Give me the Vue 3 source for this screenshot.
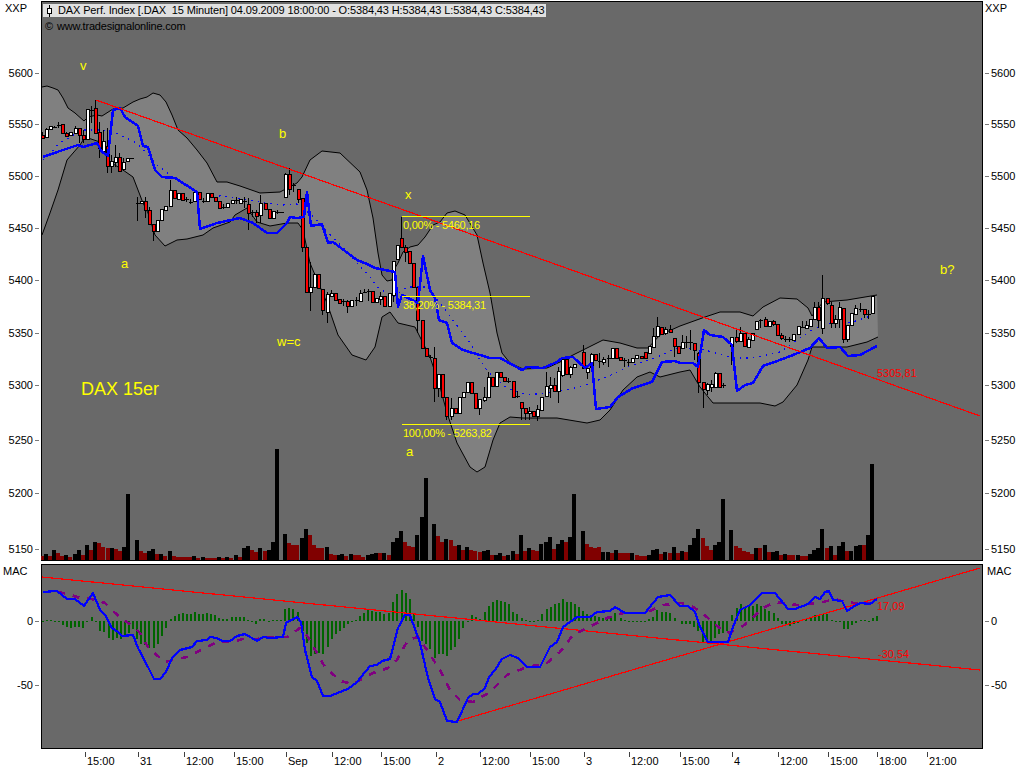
<script setup>
const toPoints = (pts) => pts.map((p) => p.join(',')).join(' ')

const titleText = 'DAX Perf. Index [.DAX  15 Minuten] 04.09.2009 18:00:00 - O:5384,43 H:5384,43 L:5384,43 C:5384,43'

const upper = [[42,87],[47,86],[53,88],[58,90],[63,98],[68,108],[75,113],[84,121],[88,117],[97,115],[102,116],[113,109],[123,108],[133,102],[140,99],[147,97],[153,93],[160,95],[166,102],[172,115],[178,130],[187,138],[197,150],[207,163],[217,182],[227,182],[240,186],[260,193],[280,192],[297,183],[302,177],[310,160],[322,151],[340,153],[360,172],[367,190],[373,218],[378,253],[382,275],[387,281],[392,280],[395,268],[398,263],[403,252],[410,247],[418,245],[425,237],[433,225],[440,222],[447,213],[455,211],[465,215],[477,235],[483,263],[490,293],[497,333],[502,353],[510,363],[523,369],[547,368],[560,362],[573,355],[587,348],[603,340],[620,343],[637,348],[648,348],[660,335],[680,326],[705,317],[720,312],[740,312],[753,316],[763,307],[780,298],[797,299],[808,308],[812,316],[823,302],[847,300],[877,295]]
const lower = [[42,235],[50,213],[58,190],[67,160],[80,145],[85,137],[100,142],[110,162],[123,170],[133,177],[138,190],[143,203],[148,213],[155,235],[165,246],[177,240],[187,239],[203,235],[213,228],[230,222],[235,215],[247,208],[257,222],[270,226],[287,223],[298,223],[303,230],[310,263],[315,275],[327,303],[338,335],[352,355],[366,360],[375,347],[382,317],[390,312],[398,323],[415,327],[423,343],[430,357],[440,387],[447,413],[457,443],[470,467],[477,472],[485,467],[493,440],[500,423],[510,417],[523,418],[557,418],[587,423],[600,420],[610,410],[623,390],[637,377],[650,372],[660,377],[680,372],[690,370],[700,387],[713,403],[728,403],[760,403],[775,406],[783,402],[797,385],[808,360],[812,347],[847,347],[867,342],[878,337]]
const bandFill = toPoints([...upper, ...[...lower].reverse()])
const upperLine = toPoints(upper)
const lowerLine = toPoints(lower)
const midLine = toPoints([[43,160],[52,152],[59,143],[83,130],[103,130],[115,133],[137,143],[157,165],[177,180],[197,193],[250,200],[267,203],[283,205],[297,204],[315,218],[328,233],[338,242],[357,263],[370,277],[377,287],[393,297],[407,287],[427,287],[440,303],[455,323],[470,343],[480,360],[488,372],[507,388],[527,395],[553,392],[580,387],[607,377],[627,367],[657,357],[680,347],[705,350],[733,358],[753,358],[780,352],[797,340],[812,330],[830,323],[853,322],[873,315]])
const maLine = toPoints([[43,157],[60,151],[78,145],[83,147],[97,143],[102,152],[108,156],[113,110],[120,108],[125,117],[138,126],[143,146],[148,147],[155,170],[162,177],[175,178],[197,192],[200,229],[217,223],[240,218],[253,223],[267,233],[277,233],[287,223],[290,217],[297,218],[304,217],[307,192],[311,226],[322,224],[328,243],[333,242],[357,260],[367,264],[375,268],[395,272],[398,307],[402,295],[418,303],[423,256],[430,290],[435,298],[439,320],[447,323],[452,343],[463,350],[490,358],[500,358],[522,370],[527,367],[543,368],[557,362],[562,358],[573,357],[585,368],[592,363],[596,409],[610,407],[618,397],[633,388],[652,382],[662,362],[675,361],[680,363],[693,363],[698,367],[704,330],[710,335],[723,337],[732,345],[737,391],[745,385],[753,383],[763,366],[780,360],[793,355],[810,348],[819,338],[827,348],[840,347],[848,356],[860,355],[877,346]])

const seg7 = [[129,'r',165,173,155,178],[141,'w',147,170,143,172],[153,'w',139,147,137,150],[165,'d',140,141,137,143],[177,'d',135,136,125,145],[189,'r',133,158],[201,'r',160,167,155,170],[213,'w',157,165,155,167],[229,'w',145,158,137,160],[241,'r',145,165,145,190],[253,'r',165,177,150,190],[265,'w',88,176],[277,'d',90,91,78,130],[289,'r',85,158,60,160],[301,'r',155,205,125,235],[313,'w',184,212,150,220],[325,'r',197,257,145,280],[337,'w',243,257,225,280],[349,'w',230,245,195,260],[361,'r',230,272,220,275],[373,'w',245,268,235,272],[385,'w',233,243],[397,'d',234,235],[415,'d',368,369,350,422],[427,'w',362,370],[439,'r',362,390,350,413],[451,'r',390,433,380,435],[463,'r',433,452,433,482],[475,'w',420,452],[487,'w',388,420],[499,'w',378,390],[514,'w',330,378,300,380],[526,'r',330,353],[538,'w',340,356],[550,'r',340,360],[562,'d',358,359,350,365],[574,'d',365,366,358,372],[586,'w',335,363],[601,'r',335,358],[613,'d',362,363,355,370],[625,'w',338,362],[637,'r',338,352],[649,'r',352,362],[661,'r',362,383],[673,'d',380,381,372,388],[685,'w',370,380],[700,'w',360,370],[712,'d',360,361,352,372],[724,'w',356,370],[736,'d',362,363,352,385],[748,'r',372,398,355,450],[760,'d',396,397,390,410],[772,'r',395,407,390,430],[784,'w',368,405,345,430],[799,'r',368,388],[811,'r',388,415],[823,'w',393,415],[835,'d',396,397,390,402],[847,'d',397,398,397,398]]
const seg8 = [[79,'w',102,172,98,172],[91,'r',102,148,85,165],[103,'d',135,136,130,155],[118,'r',148,176,148,190],[130,'r',175,320,175,335],[142,'r',320,455],[154,'w',442,455,365,512],[166,'w',403,442,400,445],[178,'r',402,445],[190,'r',448,510,448,525],[205,'w',462,515,455,548],[217,'w',458,468,450,470],[229,'r',460,480],[241,'r',478,488],[253,'d',484,486,478,498],[265,'r',484,497,480,518],[277,'w',480,497],[292,'d',480,481,470,498],[304,'w',458,482,450,485],[316,'d',455,456,448,460],[328,'d',452,453,448,482],[340,'r',453,485],[352,'w',475,485],[364,'w',467,477,455,495],[376,'r',467,497],[391,'w',460,497]]
const seg2 = [[163,'w',243,345,243,365],[175,'w',195,238],[187,'r',175,200,110,200],[199,'r',200,215,195,245],[211,'r',213,250,213,253],[223,'r',250,322],[235,'r',322,420,320,460],[250,'r',420,505],[262,'r',505,528],[274,'d',530,531,525,535],[286,'r',535,625,500,665],[298,'w',583,625,583,650],[310,'r',583,650],[322,'r',650,707,650,720],[337,'w',685,707,655,720],[349,'r',685,698],[361,'w',652,698],[373,'w',635,652],[385,'w',605,635],[397,'r',605,638],[409,'r',638,683],[421,'w',657,683,657,705],[436,'w',650,660,620,665],[448,'w',590,650,575,650],[460,'r',590,618],[472,'w',577,618],[484,'r',577,590],[496,'r',590,603],[508,'d',603,604,595,610],[523,'r',603,650],[535,'d',648,649,632,655],[547,'r',667,683,667,720],[559,'r',683,700,683,720],[571,'w',694,700,680,720],[583,'r',694,707],[595,'w',688,707,675,722],[607,'w',650,690],[622,'w',618,647,575,650],[634,'w',615,625,590,655],[646,'r',615,632,595,632],[658,'w',572,632,560,668],[670,'w',538,585,538,590],[682,'r',538,583],[694,'w',560,583,558,595],[706,'w',553,560],[733,'r',515,565,495,565],[745,'w',565,577,560,598],[757,'w',523,560,520,575],[769,'r',523,540],[781,'d',543,544,518,565],[793,'w',538,545,530,555],[808,'d',535,536,525,560],[820,'w',505,535],[832,'r',505,535],[844,'r',532,540],[856,'d',541,543,535,560],[868,'d',545,546,538,558],[880,'w',533,545],[892,'w',525,535],[907,'r',527,535],[919,'r',515,535],[931,'w',498,518],[943,'w',467,500,445,500],[955,'w',437,467,410,467],[967,'r',440,462],[979,'w',447,460,440,465],[994,'r',447,457,435,457],[1006,'r',475,497,475,530],[1018,'r',497,520]]
const seg3 = [[10,'w',247,263,225,265],[22,'d',246,247,228,265],[34,'d',247,248,210,270],[46,'r',250,270,250,300],[58,'r',278,365,275,400],[73,'r',365,388,365,445],[85,'w',373,390,370,405],[97,'w',373,382,360,395],[109,'w',340,380,335,380],[121,'r',340,380],[133,'d',376,377,370,385],[157,'w',232,258,232,315],[172,'r',232,243,205,250],[184,'w',220,243,200,245],[196,'r',220,257],[208,'w',237,260,230,265],[220,'w',218,240],[232,'w',182,208],[244,'d',181,182,178,205],[259,'r',178,197,170,200],[271,'w',183,197],[283,'r',183,193,180,198],[295,'r',193,225],[307,'r',225,235,220,240],[319,'d',237,238,228,245],[331,'d',237,238,232,245],[343,'w',222,240],[358,'w',198,222],[370,'d',200,201,182,205],[382,'w',195,203,182,205],[394,'w',176,197],[406,'w',142,176,125,180],[418,'r',142,180,125,205],[430,'w',115,205,45,222],[445,'r',115,130,115,135],[457,'r',135,190,125,205],[469,'w',178,190,165,205],[481,'w',142,178,125,205],[493,'r',145,238,145,250],[505,'w',195,238,195,245],[517,'w',160,195],[529,'w',145,162,135,165],[544,'d',148,149,130,155],[556,'r',148,162,148,175],[568,'d',162,163,150,178],[580,'w',108,160]]

const fills = { w: '#fff', r: '#f00', d: '#000' }
const toCandles = (ox, oy, rows) =>
  rows.map(([x, t, a, b, wt, wb]) => {
    const cx = Math.round(ox + x / 3)
    const top = Math.round(oy + a / 3)
    const bot = Math.max(Math.round(oy + b / 3), top + 1)
    return {
      wickX: cx - 1,
      wickY: Math.round(oy + (wt ?? a) / 3),
      wickH: Math.max(Math.round(oy + (wb ?? b) / 3) - Math.round(oy + (wt ?? a) / 3), 1),
      bodyX: cx - 2,
      bodyY: top,
      bodyH: t === 'd' ? 1 : bot - top,
      dash: t === 'd',
      fill: fills[t],
    }
  })
const candles = [
  ...toCandles(0, 80, seg7),
  ...toCandles(260, 140, seg8),
  ...toCandles(340, 180, seg2),
  ...toCandles(680, 260, seg3),
]

const vol4 = [[127,'r',348],[138,'k',342],[150,'r',348],[162,'k',330],[174,'r',339],[186,'r',348],[198,'k',345],[210,'r',351],[225,'k',342],[237,'k',330],[249,'r',345],[261,'k',315],[273,'r',330],[285,'k',306],[297,'r',309],[309,'r',321],[324,'r',324],[336,'k',324],[348,'r',327],[360,'r',333],[372,'k',321],[384,'k',162],[411,'k',300],[423,'r',333],[435,'r',339],[447,'k',333],[459,'k',327],[471,'r',342],[483,'k',342],[495,'r',348],[510,'k',333],[522,'r',348],[534,'r',351],[546,'r',351],[558,'r',351],[570,'r',351],[582,'k',348],[594,'r',354],[609,'k',351],[621,'r',354],[633,'r',354],[645,'r',354],[657,'k',351],[669,'r',354],[681,'k',351],[693,'r',354],[708,'k',345],[720,'r',351],[732,'k',324],[744,'k',318],[756,'r',330],[768,'r',336],[780,'k',324],[795,'r',333],[807,'k',330],[819,'k',306],[831,'k',27],[855,'k',282],[867,'r',309],[879,'r',315],[891,'r',315],[906,'k',294],[918,'k',267],[930,'r',285],[942,'r',315],[954,'r',324],[966,'r',324],[981,'k',321],[993,'r',342],[1005,'r',345],[1017,'k',345]]
const vol5 = [[7,'k',342],[19,'r',348],[33,'k',342],[45,'r',345],[57,'r',345],[69,'r',351],[84,'k',345],[96,'k',342],[108,'k',339],[120,'r',339],[132,'k',339],[147,'r',345],[159,'k',306],[171,'k',294],[183,'k',273],[195,'r',306],[207,'r',318],[219,'r',321],[231,'k',285],[246,'k',231],[258,'k',114],[282,'k',252],[294,'r',288],[306,'r',306],[318,'k',297],[333,'r',300],[345,'r',318],[357,'k',315],[369,'r',330],[381,'k',321],[393,'r',330],[405,'r',333],[420,'r',336],[432,'k',333],[444,'k',330],[456,'r',345],[468,'k',345],[480,'k',339],[492,'r',348],[504,'k',345],[519,'k',333],[531,'r',342],[543,'k',285],[555,'r',333],[567,'k',324],[579,'r',330],[591,'r',333],[603,'k',312],[618,'k',306],[630,'k',291],[642,'r',327],[654,'k',312],[666,'k',300],[678,'r',306],[690,'k',291],[702,'k',162],[729,'k',273],[741,'r',312],[753,'r',321],[765,'r',324],[777,'r',321],[789,'k',336],[804,'k',336],[816,'r',339],[828,'k',330],[840,'r',339],[852,'r',339],[864,'r',339],[876,'k',339],[891,'r',345],[903,'r',348],[915,'r',348],[927,'k',345],[939,'k',330],[951,'k',327],[963,'r',342],[975,'k',336],[990,'r',339],[1002,'k',321],[1014,'r',339]]
const vol6 = [[5,'k',333],[17,'r',336],[29,'k',315],[41,'k',294],[53,'k',267],[69,'r',294],[81,'r',318],[93,'r',330],[105,'k',315],[117,'k',306],[129,'k',177],[153,'k',270],[168,'r',318],[180,'r',324],[192,'r',333],[204,'r',336],[216,'r',342],[228,'k',324],[240,'r',324],[255,'k',315],[267,'r',336],[279,'k',336],[291,'k',333],[303,'r',345],[315,'k',342],[327,'r',345],[339,'r',345],[354,'k',345],[366,'r',348],[378,'r',348],[390,'k',342],[402,'k',330],[414,'k',324],[426,'k',267],[441,'r',324],[453,'k',318],[465,'r',345],[477,'k',318],[489,'k',306],[501,'r',333],[513,'k',333],[528,'k',318],[540,'k',315],[552,'r',315],[564,'k',285],[576,'k',72]]
const toVolume = (ox, rows) =>
  rows.map(([x, c, y]) => {
    const top = Math.round(440 + y / 3)
    return { x: Math.round(ox + x / 3) - 2, y: top, h: 560 - top, fill: c === 'k' ? '#000' : '#800000' }
  })
const volume = [...toVolume(0, vol4), ...toVolume(340, vol5), ...toVolume(680, vol6)]

const hist4 = [[129,1],[141,-3],[153,-3],[165,1],[177,1],[189,12],[201,17],[213,20],[225,17],[237,17],[249,22],[262,1],[275,-12],[287,2],[299,30],[311,32],[326,52],[338,58],[350,52],[362,55],[374,45],[386,35],[398,25],[411,55],[423,68],[435,72],[447,80],[462,82],[474,68],[486,45],[498,22],[512,-5],[524,-15],[536,-22],[548,-23],[560,-21],[572,-21],[584,-26],[596,-22],[608,-22],[622,-23],[634,-21],[646,-18],[658,-8],[670,-6],[682,-6],[697,-12],[709,-12],[721,-12],[733,-12],[745,-4],[757,1],[769,8],[781,-5],[793,-5],[808,-1],[820,-2],[832,-3],[844,-3],[856,-35],[868,-38],[880,-36],[895,-28],[908,30],[920,65],[932,105],[944,100],[956,95],[968,100],[983,78],[995,55],[1007,40],[1019,30]]
const hist5 = [[12,22],[24,10],[36,3],[48,-3],[60,-15],[72,-25],[84,-33],[96,-30],[108,-28],[120,-28],[132,-22],[146,-25],[160,-58],[172,-82],[185,-92],[197,-85],[210,-65],[222,-20],[235,18],[247,60],[259,70],[271,85],[284,110],[296,98],[308,100],[320,105],[334,88],[346,78],[358,55],[370,20],[383,3],[395,-17],[407,-12],[419,-5],[434,-28],[446,-45],[458,-58],[470,-62],[482,-60],[494,-58],[506,-50],[520,-28],[532,-22],[545,-8],[557,-3],[569,-1],[581,2],[593,-3],[605,-20],[620,-35],[632,-42],[644,-50],[656,-55],[668,-65],[680,-58],[692,-57],[704,-52],[716,-42],[728,-30],[742,-22],[754,-18],[766,-15],[778,-12],[790,-8],[802,-8],[814,-15],[826,-25],[842,-10],[854,-3],[866,-1],[878,-1],[890,-1],[902,-1],[915,-1],[927,-5],[939,-12],[951,-32],[966,-28],[978,-27],[990,-25],[1005,-8]]
const hist6 = [[7,10],[19,10],[31,8],[43,18],[55,30],[70,65],[82,65],[94,65],[106,50],[118,40],[130,35],[142,30],[155,-18],[170,-40],[182,-50],[194,-42],[206,-45],[218,-45],[230,-50],[242,-45],[254,-35],[266,-30],[281,-25],[293,-8],[305,10],[317,12],[329,15],[341,8],[353,5],[365,-2],[377,-5],[392,-8],[404,-18],[416,-15],[428,-22],[440,-20],[455,-3],[467,1],[479,1],[491,25],[503,25],[515,12],[527,5],[542,-3],[554,-2],[566,3],[578,-8],[590,-16]]
const toHist = (ox, rows) =>
  rows.map(([x, d]) => {
    const a = 621
    const b = Math.round(621 + d / 3) || 621
    const top = Math.min(a, b)
    return { x: Math.round(ox + x / 3) - 1, y: top, h: Math.max(Math.abs(b - a), 1) }
  })
const histogram = [...toHist(0, hist4), ...toHist(340, hist5), ...toHist(680, hist6)]

const macdLine = toPoints([[43,592],[57,591],[67,599],[75,599],[84,606],[93,593],[100,610],[105,615],[112,628],[118,632],[122,636],[133,635],[138,648],[148,667],[154,679],[160,679],[166,672],[172,658],[180,650],[192,647],[197,641],[207,640],[210,637],[217,638],[222,641],[230,641],[237,636],[245,634],[257,641],[263,637],[270,638],[283,637],[286,623],[297,617],[301,622],[305,650],[312,677],[317,681],[323,696],[330,696],[340,692],[348,689],[357,682],[370,666],[377,665],[382,661],[390,659],[398,628],[405,615],[410,615],[420,643],[428,678],[435,699],[440,702],[447,721],[457,722],[468,698],[473,694],[478,694],[485,688],[489,677],[495,670],[502,659],[510,655],[518,658],[527,667],[540,667],[550,647],[557,642],[563,627],[577,617],[590,617],[597,612],[610,611],[615,607],[625,613],[645,613],[658,597],[670,595],[680,606],[688,606],[695,612],[700,627],[708,642],[728,642],[733,627],[740,610],[750,605],[762,593],[775,593],[788,609],[795,609],[808,604],[815,597],[820,599],[825,592],[829,591],[833,600],[842,601],[847,611],[853,607],[860,603],[870,604],[877,599]])
const signalLine = toPoints([[43,592],[58,592],[68,594],[80,598],[92,599],[105,603],[113,611],[123,620],[132,625],[140,633],[148,647],[160,658],[165,662],[173,660],[187,657],[207,647],[217,642],[233,642],[243,639],[257,639],[267,637],[277,637],[287,637],[300,628],[308,637],[318,655],[325,667],[335,676],[340,681],[353,684],[373,673],[388,668],[397,660],[408,640],[418,637],[427,650],[440,670],[450,690],[460,700],[473,702],[490,692],[507,675],[527,667],[547,663],[560,652],[573,635],[587,628],[607,618],[623,613],[645,613],[663,605],[680,603],[688,604],[698,610],[708,618],[717,626],[727,633],[737,630],[747,623],[763,608],[775,602],[785,603],[797,605],[810,604],[823,602],[835,599],[845,602],[855,603],[870,603]])

const priceTicks = [[5600,73],[5550,124],[5500,176],[5450,228],[5400,280],[5350,333],[5300,385],[5250,440],[5200,493],[5150,549]].map(([label, y]) => ({ label, y }))
const macTicks = [{ label: '0', y: 621 }, { label: '-50', y: 685 }]
const timeTicks = [['15:00',85],['31',138],['12:00',184],['15:00',234],['Sep',286],['12:00',332],['15:00',381],['2',436],['12:00',480],['15:00',530],['3',584],['12:00',629],['15:00',680],['4',732],['12:00',778],['15:00',828],['18:00',877],['21:00',927]].map(([label, x]) => ({ label, x }))
const notes = [['v',80,70],['b',279,138],['x',405,199],['a',121,268],['w=c',277,346],['a',406,456],['b?',940,274]].map(([text, x, y]) => ({ text, x, y }))
const fibs = [
  { y: 216, text: '0,00% - 5460,16' },
  { y: 296, text: '38,20% - 5384,31' },
  { y: 424, text: '100,00% - 5263,82' },
]
</script>

<template>
  <div class="screen">
    <div class="row-top">
      <svg class="axis" viewBox="0 0 41 561" width="41" height="561">
        <text class="label" x="5" y="12">XXP</text>
        <g v-for="t in priceTicks" :key="t.label">
          <text class="label" x="33" :y="t.y + 4" text-anchor="end">{{ t.label }}</text>
          <rect class="tick" x="35" :y="t.y" width="4" height="1" />
        </g>
      </svg>
      <div class="pane">
        <svg viewBox="41 0 942 561" width="942" height="561">
          <rect x="41" y="1" width="942" height="560" fill="#000" />
          <rect x="42" y="2" width="940" height="558" fill="#696969" />
          <polygon :points="bandFill" fill="#808080" />
          <polyline class="thin" :points="upperLine" />
          <polyline class="thin" :points="lowerLine" />
          <polyline class="dots" :points="midLine" />
          <rect v-for="(v, i) in volume" :key="'v' + i" class="crisp" :x="v.x" :y="v.y" width="4" :height="v.h" :fill="v.fill" />
          <g v-for="(c, i) in candles" :key="'c' + i" class="crisp">
            <rect :x="c.wickX" :y="c.wickY" width="1" :height="c.wickH" fill="#000" />
            <rect v-if="c.dash" :x="c.bodyX" :y="c.bodyY" width="4" height="1" fill="#000" />
            <rect v-else :x="c.bodyX + 0.5" :y="c.bodyY + 0.5" width="3" :height="c.bodyH" :fill="c.fill" stroke="#000" />
          </g>
          <polyline class="blue" :points="maLine" />
          <line class="redline" x1="96" y1="100" x2="980" y2="416" />
          <g v-for="f in fibs" :key="f.y">
            <rect class="crisp" x="402" :y="f.y" width="128" height="1" fill="#ff0" />
            <text class="note fib" x="403" :y="f.y + 13">{{ f.text }}</text>
          </g>
          <text v-for="n in notes" :key="n.text + n.x" class="note" :x="n.x" :y="n.y">{{ n.text }}</text>
          <text class="note big" x="81" y="395">DAX 15er</text>
          <text class="red" x="877" y="377">5305,81</text>
        </svg>
        <div class="titlebar">
          <svg class="titleicon" viewBox="0 0 6 12" width="6" height="12">
            <rect class="crisp" x="2" y="0" width="1" height="12" fill="#000" />
            <rect class="crisp" x="0.5" y="3.5" width="4" height="5" fill="#fff" stroke="#000" />
          </svg>
          <span>{{ titleText }}</span>
        </div>
        <div class="site">
          <span class="copy">©</span>
          <span class="url">www.tradesignalonline.com</span>
        </div>
      </div>
      <svg class="axis" viewBox="983 0 41 561" width="41" height="561">
        <text class="label" x="985" y="12">XXP</text>
        <g v-for="t in priceTicks" :key="t.label">
          <rect class="tick" x="985" :y="t.y" width="4" height="1" />
          <text class="label" x="991" :y="t.y + 4">{{ t.label }}</text>
        </g>
      </svg>
    </div>
    <div class="gap"></div>
    <div class="row-bottom">
      <svg class="axis" viewBox="0 564 41 185" width="41" height="185">
        <text class="label" x="3" y="575">MAC</text>
        <g v-for="t in macTicks" :key="t.label">
          <text class="label" x="33" :y="t.y + 4" text-anchor="end">{{ t.label }}</text>
          <rect class="tick" x="35" :y="t.y" width="4" height="1" />
        </g>
      </svg>
      <svg class="pane-lower" viewBox="41 564 942 185" width="942" height="185">
        <rect x="41" y="564" width="942" height="185" fill="#000" />
        <rect x="42" y="565" width="940" height="183" fill="#696969" />
        <rect v-for="(h, i) in histogram" :key="'h' + i" class="crisp" :x="h.x" :y="h.y" width="2" :height="h.h" fill="#006400" />
        <line class="redline" x1="42" y1="577" x2="980" y2="670" />
        <line class="redline" x1="458" y1="721" x2="980" y2="568" />
        <polyline class="signal" :points="signalLine" />
        <polyline class="blue slim" :points="macdLine" />
        <text class="red" x="877" y="610">17,09</text>
        <text class="red" x="878" y="658">-30,54</text>
      </svg>
      <svg class="axis" viewBox="983 564 41 185" width="41" height="185">
        <text class="label" x="987" y="575">MAC</text>
        <g v-for="t in macTicks" :key="t.label">
          <rect class="tick" x="985" :y="t.y" width="4" height="1" />
          <text class="label" x="991" :y="t.y + 4">{{ t.label }}</text>
        </g>
      </svg>
    </div>
    <svg class="timeaxis" viewBox="0 749 1024 19" width="1024" height="19">
      <g v-for="t in timeTicks" :key="t.label + t.x">
        <rect class="crisp" :x="t.x" y="752" width="1" height="5" fill="#404040" />
        <text class="label" :x="t.x + 2" y="765">{{ t.label }}</text>
      </g>
    </svg>
  </div>
</template>

<style scoped>
.screen {
  display: flex;
  flex-direction: column;
  width: 1024px;
  height: 768px;
  overflow: hidden;
  background: #fff;
  font-family: "Liberation Sans", Arial, sans-serif;
}
.row-top,
.row-bottom {
  display: flex;
}
.gap {
  height: 3px;
}
svg {
  display: block;
  flex: none;
}
.pane {
  position: relative;
  width: 942px;
  height: 561px;
}
.titlebar {
  position: absolute;
  left: 2px;
  top: 4px;
  display: flex;
  align-items: center;
  gap: 5px;
  width: 503px;
  height: 13px;
  padding-left: 4px;
  box-sizing: border-box;
  background: #e0e0e0;
  color: #000;
  font-size: 11px;
  letter-spacing: -0.13px;
  line-height: 13px;
  white-space: pre;
}
.site {
  position: absolute;
  left: 4px;
  top: 20px;
  display: flex;
  gap: 4px;
  color: #000;
  font-size: 11px;
  line-height: 13px;
  white-space: pre;
}
.url {
  letter-spacing: -0.2px;
}
.label {
  font-size: 11px;
  fill: #000;
}
.tick {
  fill: #7a7a7a;
  shape-rendering: crispEdges;
}
.crisp {
  shape-rendering: crispEdges;
}
.thin {
  fill: none;
  stroke: #000;
  stroke-width: 1;
}
.dots {
  fill: none;
  stroke: #0000ff;
  stroke-width: 1.2;
  stroke-dasharray: 1.5 5;
  shape-rendering: crispEdges;
}
.blue {
  fill: none;
  stroke: #0000ff;
  stroke-width: 2.5;
  stroke-linejoin: round;
  shape-rendering: crispEdges;
}
.slim {
  stroke-width: 2.2;
}
.signal {
  fill: none;
  stroke: #800080;
  stroke-width: 2.6;
  stroke-dasharray: 7 8;
  shape-rendering: crispEdges;
}
.redline {
  stroke: #f00;
  stroke-width: 1.2;
  shape-rendering: crispEdges;
}
.note {
  font-size: 13px;
  fill: #ff0;
}
.fib {
  font-size: 11px;
  letter-spacing: -0.25px;
}
.big {
  font-size: 18px;
}
.red {
  font-size: 11px;
  fill: #f00;
}
</style>

<style>
html,
body {
  background: #fff;
}
</style>
